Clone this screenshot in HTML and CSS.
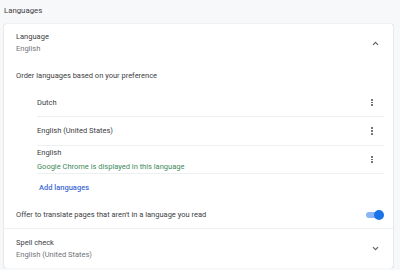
FILE: index.html
```html
<!DOCTYPE html>
<html lang="en">
<head>
  <meta charset="UTF-8">
  <title>Languages</title>
  <link rel="stylesheet" href="styles.css">
</head>
<body>
  <h2 class="section-title">Languages</h2>
  <div class="card">
    <div class="row expand">
      <div class="text">
        <div class="label">Language</div>
        <div class="sub">English</div>
      </div>
      <svg class="chevron" width="7" height="5" viewBox="0 0 7 5"><path d="M1 3.8 L3.5 1.3 L6 3.8" fill="none" stroke="#5f6368" stroke-width="1.2"/></svg>
    </div>
    <div class="row hint">Order languages based on your preference</div>
    <div class="lang-list">
      <div class="lang-item">
        <div class="label">Dutch</div>
        <span class="dots"><i></i><i></i><i></i></span>
      </div>
      <div class="lang-item tall">
        <div class="label">English (United States)</div>
        <span class="dots"><i></i><i></i><i></i></span>
      </div>
      <div class="lang-item">
        <div class="text">
          <div class="label">English</div>
          <div class="note">Google Chrome is displayed in this language</div>
        </div>
        <span class="dots"><i></i><i></i><i></i></span>
      </div>
      <div class="add-link">Add languages</div>
    </div>
    <div class="row toggle-row">
      <div class="label">Offer to translate pages that aren't in a language you read</div>
      <span class="toggle"><span class="knob"></span></span>
    </div>
    <div class="row expand spell">
      <div class="text">
        <div class="label">Spell check</div>
        <div class="sub">English (United States)</div>
      </div>
      <svg class="chevron" width="7" height="5" viewBox="0 0 7 5"><path d="M1 1.2 L3.5 3.7 L6 1.2" fill="none" stroke="#5f6368" stroke-width="1.2"/></svg>
    </div>
  </div>
</body>
</html>
```

FILE: styles.css
```css
body {
  margin: 0;
  background: #f7f8f9;
  font-family: Roboto, "Liberation Sans", sans-serif;
  font-size: 7.5px;
  color: #3c4043;
}
.section-title {
  margin: 0;
  padding: 5px 4px 0;
  height: 19px;
  font-size: 7.8px;
  font-weight: normal;
  color: #3c4043;
  line-height: 11px;
}
.card {
  margin: 0 7px 0 4px;
  background: #fff;
  border-radius: 2px;
  box-shadow: 0 0 1px rgba(0, 0, 0, 0.3), 0 1px 2px rgba(0, 0, 0, 0.12);
}
.row {
  display: flex;
  align-items: center;
  justify-content: space-between;
  padding: 0 14px 0 12px;
  box-sizing: border-box;
}
.label {
  line-height: 12px;
  color: #3c4043;
}
.sub {
  line-height: 12px;
  color: #70757a;
}
.expand {
  height: 38px;
}
.chevron {
  display: block;
}
.hint {
  height: 27px;
}
.lang-list {
  margin: 0 9px 0 33px;
}
.lang-item {
  display: flex;
  align-items: center;
  justify-content: space-between;
  box-sizing: border-box;
  height: 28px;
  border-bottom: 1px solid #eeeff0;
  padding: 0 11px 0 0;
}
.lang-item.tall {
  height: 29px;
}
.note {
  line-height: 14px;
  color: #3d8a5b;
}
.lang-item .text .label {
  line-height: 14px;
}
.dots {
  display: flex;
  flex-direction: column;
  gap: 1.2px;
}
.dots i {
  display: block;
  width: 1.6px;
  height: 1.6px;
  background: #5a5a5a;
  border-radius: 50%;
}
.add-link {
  height: 28px;
  line-height: 28px;
  padding-left: 2px;
  color: #4169d4;
  font-weight: 500;
}
.toggle-row {
  height: 27px;
  border-bottom: 1px solid #eeeff0;
  padding-right: 11px;
}
.toggle {
  position: relative;
  width: 16px;
  height: 6px;
  border-radius: 3px;
  background: #8ab4f8;
}
.knob {
  position: absolute;
  right: -2px;
  top: -2px;
  width: 10px;
  height: 10px;
  border-radius: 50%;
  background: #1a73e8;
}
.spell {
  height: 39px;
}
```
